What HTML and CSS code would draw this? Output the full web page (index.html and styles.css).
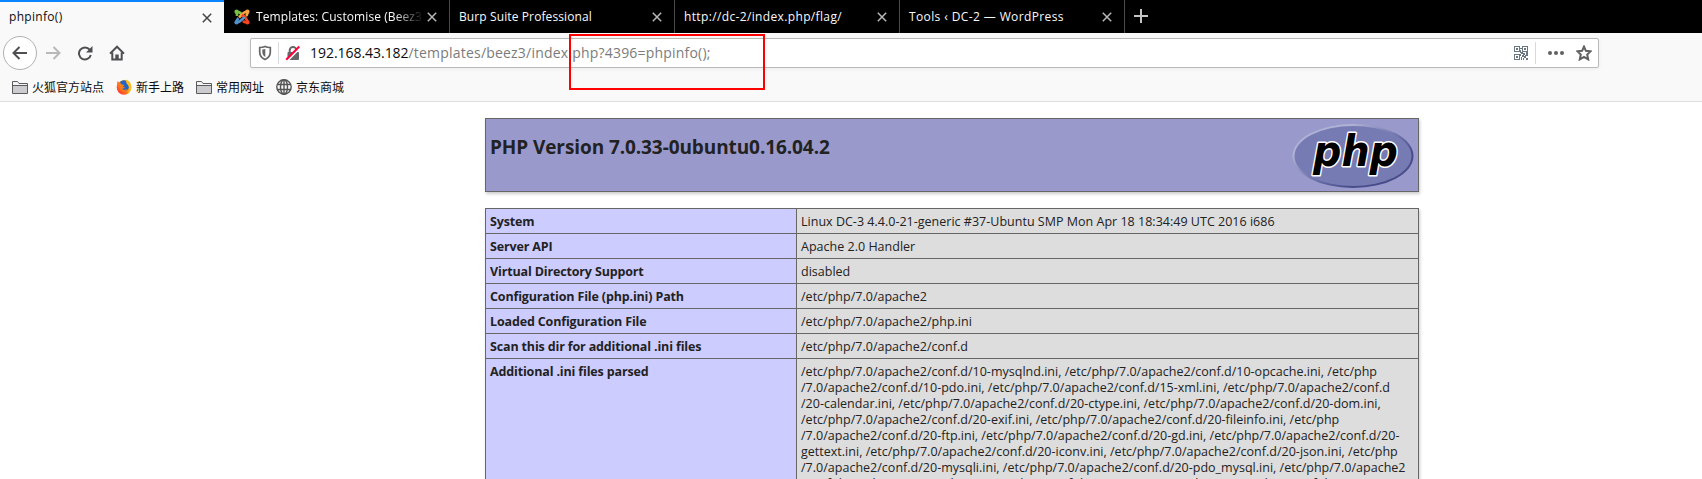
FILE: index.html
```html
<!DOCTYPE html>
<html lang="zh-CN">
<head>
<meta charset="utf-8">
<title>phpinfo()</title>
<link rel="stylesheet" href="styles.css">
</head>
<body>
<header class="browser">
  <div class="tabs">
    <div class="tab active"><span class="title t-info">phpinfo()</span><svg class="close" viewBox="0 0 10 10"><path d="M.8.8l8.4 8.4M9.2.8L.8 9.2"/></svg></div>
    <div class="tab second">
      <svg class="favicon" viewBox="0 0 16 16" fill="none" stroke-width="2.6">
        <path d="M3 3.500C5 2 6.500 4 8 5.500L11 8.500" stroke="#7ac143"/><path d="M3 7V4.500L3 3" stroke="#7ac143"/>
        <path d="M13 3C11 2 9.500 4 8 5.500L5 8.500" stroke="#f9a541"/><path d="M13 3.500C13.500 5 13 6 12 7" stroke="#f9a541"/>
        <path d="M13 13C13.500 11.500 12.500 10 11 8.500L8 5.800" stroke="#f44321"/><path d="M13 13C11.500 13.500 10 13 9 12" stroke="#f44321"/>
        <path d="M3 13C5 13.500 6 12.500 8 10.500L10.500 8" stroke="#5091cd"/><path d="M3 13C2.500 11 3.500 10 4.500 9" stroke="#5091cd"/>
        <g stroke="none"><circle cx="2.600" cy="2.800" r="2.200" fill="#7ac143"/><circle cx="13.400" cy="2.800" r="2.200" fill="#f9a541"/><circle cx="13.400" cy="13.300" r="2.200" fill="#f44321"/><circle cx="2.600" cy="13.300" r="2.200" fill="#5091cd"/></g>
      </svg>
      <span class="title t-templates">Templates: Customise (Beez3</span><svg class="close" viewBox="0 0 10 10"><path d="M.8.8l8.4 8.4M9.2.8L.8 9.2"/></svg></div>
    <div class="tab"><span class="title t-burp">Burp Suite Professional</span><svg class="close" viewBox="0 0 10 10"><path d="M.8.8l8.4 8.4M9.2.8L.8 9.2"/></svg></div>
    <div class="tab"><span class="title t-flag">http://dc-2/index.php/flag/</span><svg class="close" viewBox="0 0 10 10"><path d="M.8.8l8.4 8.4M9.2.8L.8 9.2"/></svg></div>
    <div class="tab"><span class="title t-tools">Tools ‹ DC-2 — WordPress</span><svg class="close" viewBox="0 0 10 10"><path d="M.8.8l8.4 8.4M9.2.8L.8 9.2"/></svg></div>
    <svg class="new-tab" viewBox="0 0 14 14"><path d="M7 0v14M0 7h14"/></svg>
  </div>

  <div class="toolbar">
    <span class="back"><svg class="icon" viewBox="0 0 16 16"><path d="M15 8H1.800M7.500 2L1.500 8l6 6"/></svg></span>
    <svg class="icon forward" viewBox="0 0 16 16"><path d="M1 8h13.200M8.500 2l6 6-6 6"/></svg>
    <svg class="icon reload" viewBox="0 0 16 16"><path d="M12.700 4.700A6 6 0 1 0 13.800 10"/><path class="solid" d="M15.500 1v6.500H9z"/></svg>
    <svg class="icon home" viewBox="0 0 16 16"><path d="M1 8.600L8 1.700l7 6.900M3.300 7.500V14.500h9.400V7.500"/><path class="solid" d="M6.300 15V9.500h3.400V15z"/></svg>
    <div class="urlbar">
      <svg class="shield" viewBox="0 0 14 16"><path d="M7 1.500c2 .9 3.800 1 5.300 1V7c0 3.600-2 6-5.300 7.500C3.700 13 1.700 10.600 1.700 7V2.500c1.500 0 3.300-.1 5.300-1z"/><path class="solid" d="M7.300 4v8C5.300 11 4.300 9 4.300 7V4.600z"/></svg>
      <span class="divider"></span>
      <svg class="lock" viewBox="0 0 16 16"><path d="M4.700 8V5.300a3.300 3.300 0 0 1 6.600 0V8" fill="none" stroke="#666" stroke-width="2"/><rect x="2.500" y="7" width="11.500" height="8" rx="1" fill="#666"/><path d="M2.200 15.800L15 3" stroke="#fff" stroke-width="2"/><path d="M1.200 14.800L14.300 1.500" stroke="#ff0039" stroke-width="2"/></svg>
      <span class="host">192.168.43.182</span><span class="path">/templates/beez3/index.php?4396=phpinfo();</span>
      <svg class="qr" viewBox="0 0 14 14" shape-rendering="crispEdges"><path fill="none" stroke="#6b7683" d="M.5.5h5v5h-5zM8.500.5h5v5h-5zM.5 8.500h5v5h-5z"/><path fill="#6b7683" d="M2 2h2v2H2zM10 2h2v2h-2zM2 10h2v2H2zM6 2h2v1H6zM6 4h1v3H6zM7 6h2v2H7zM9 7h2v2H9zM12 6h2v2h-2zM6 8h1v2H6zM8 9h2v2H8zM11 9h1v1h-1zM12 8h2v2h-2zM10 10h2v2h-2zM7 11h1v3H7zM12 12h2v2h-2zM9 12h1v2H9z"/></svg>
      <span class="divider"></span>
      <svg class="dots" viewBox="0 0 16 16"><circle cx="2" cy="8" r="2"/><circle cx="8" cy="8" r="2"/><circle cx="14" cy="8" r="2"/></svg>
      <svg class="icon star" viewBox="0 0 16 16"><path d="M8 1.600l1.900 4.200 4.700.5-3.400 3.200 1 4.900L8 11.900l-4.200 2.500 1-4.900L1.400 6.300l4.700-.5z"/></svg>
    </div>
  </div>

  <nav class="bookmarks">
    <span class="bookmark b1"><svg viewBox="0 0 16 16"><path d="M.5 14.500v-12h5l1.500 2h8.500v10zM.5 6.500h15" fill="#cccbcf" stroke="#5b5a5d"/><path d="M1 3h4.300l1.500 2H15v1H1z" fill="#f4f4f5"/></svg>火狐官方站点</span>
    <span class="bookmark b2"><svg viewBox="0 0 16 16"><defs><linearGradient id="fire" x1="1" y1="0" x2="0" y2="1"><stop offset="0" stop-color="#ffe226"/><stop offset=".45" stop-color="#ff980e"/><stop offset="1" stop-color="#ff1744"/></linearGradient></defs><circle cx="8" cy="8.500" r="7.300" fill="url(#fire)"/><path d="M1 7L1.500 2l2 2z" fill="#ff6b1a"/><path d="M4 3C7 .2 11 1 12.500 4c2 4-.5 8-4 8C6 12 4 10.500 4 8.500l3-.5 1-2-3-.8z" fill="#2464c9"/><path d="M10 .5c4 1.500 5.800 5 5.200 9-.4 2.500-2 4.500-4 5.500 2-3 2.500-6 1-8.500C11 5 9.500 3 10 .5z" fill="#ffbd20"/><path d="M3.500 7.500c2-1 3 1 5.500.6-.6 1.400-2 1.600-3 1.400 1 1.600 3.500 1.500 5 .5-1 3-6.500 3-7.500-.5z" fill="#ff7a16"/></svg>新手上路</span>
    <span class="bookmark b3"><svg viewBox="0 0 16 16"><path d="M.5 14.500v-12h5l1.500 2h8.500v10zM.5 6.500h15" fill="#cccbcf" stroke="#5b5a5d"/><path d="M1 3h4.300l1.500 2H15v1H1z" fill="#f4f4f5"/></svg>常用网址</span>
    <span class="bookmark b4"><svg viewBox="0 0 16 16" fill="none" stroke="#555" stroke-width="1.400"><circle cx="8" cy="8" r="7.200"/><ellipse cx="8" cy="8" rx="3.500" ry="7.200"/><path d="M1.500 5.500h13M1.500 10.500h13M8 1v14"/></svg>京东商城</span>
  </nav>
  <div class="highlight"></div>
</header>

<main class="page">
  <section class="banner">
    <h1>PHP Version 7.0.33-0ubuntu0.16.04.2</h1>
    <svg class="php-logo" viewBox="0 0 122 66">
      <defs>
        <linearGradient id="rim" x1="0" y1="0" x2="1" y2="1"><stop offset=".25" stop-color="#aeb2d5"/><stop offset=".5" stop-color="#7377ad"/><stop offset=".72" stop-color="#484c89"/></linearGradient>
      </defs>
      <ellipse cx="61" cy="33" rx="60.500" ry="32" fill="url(#rim)"/>
      <ellipse cx="61" cy="33" rx="58.500" ry="30" fill="#777bb3"/>
      <text x="21" y="42.500" textLength="85" lengthAdjust="spacingAndGlyphs">php</text>
    </svg>
  </section>

  <div class="info">
    <div class="row"><b>System</b><span>Linux DC-3 4.4.0-21-generic #37-Ubuntu SMP Mon Apr 18 18:34:49 UTC 2016 i686</span></div>
    <div class="row"><b>Server API</b><span>Apache 2.0 Handler</span></div>
    <div class="row"><b>Virtual Directory Support</b><span>disabled</span></div>
    <div class="row"><b>Configuration File (php.ini) Path</b><span>/etc/php/7.0/apache2</span></div>
    <div class="row"><b>Loaded Configuration File</b><span>/etc/php/7.0/apache2/php.ini</span></div>
    <div class="row"><b>Scan this dir for additional .ini files</b><span>/etc/php/7.0/apache2/conf.d</span></div>
    <div class="row"><b>Additional .ini files parsed</b><span>/etc/php/7.0/apache2/conf.d/10-mysqlnd.ini, /etc/php/7.0/apache2/conf.d/10-opcache.ini, /etc/php<br>/7.0/apache2/conf.d/10-pdo.ini, /etc/php/7.0/apache2/conf.d/15-xml.ini, /etc/php/7.0/apache2/conf.d<br>/20-calendar.ini, /etc/php/7.0/apache2/conf.d/20-ctype.ini, /etc/php/7.0/apache2/conf.d/20-dom.ini,<br>/etc/php/7.0/apache2/conf.d/20-exif.ini, /etc/php/7.0/apache2/conf.d/20-fileinfo.ini, /etc/php<br>/7.0/apache2/conf.d/20-ftp.ini, /etc/php/7.0/apache2/conf.d/20-gd.ini, /etc/php/7.0/apache2/conf.d/20-<br>gettext.ini, /etc/php/7.0/apache2/conf.d/20-iconv.ini, /etc/php/7.0/apache2/conf.d/20-json.ini, /etc/php<br>/7.0/apache2/conf.d/20-mysqli.ini, /etc/php/7.0/apache2/conf.d/20-pdo_mysql.ini, /etc/php/7.0/apache2<br>/conf.d/20-phar.ini, /etc/php/7.0/apache2/conf.d/20-posix.ini, /etc/php/7.0/apache2/conf.d</span></div>
  </div>
</main>
</body>
</html>
```
FILE: styles.css
```css
* { box-sizing: border-box; }
html, body { height: 479px; overflow: hidden; }
body {
  margin: 0;
  background: #fff;
  color: #222;
  font-family: "Open Sans", "Noto Sans CJK SC", sans-serif;
  display: flex;
  flex-direction: column;
}
svg { display: block; flex: none; }

/* Browser chrome */
.browser {
  position: relative;
  flex: none;
  height: 102px;
  background: #f9f9fa;
  border-bottom: 1px solid #dededf;
}
.tabs { display: flex; height: 33px; background: #000; }
.tab {
  display: flex;
  align-items: center;
  width: 225px;
  padding: 1px 12px 0 9px;
  border-right: 1px solid #4a4a4a;
  color: #f9f9fa;
}
.tab.second { width: 226px; padding-left: 10px; }
.tab.active {
  width: 224px;
  padding: 0 12px 0 9px;
  background: #f9f9fa;
  border-top: 2px solid #0a84ff;
  border-right: 0;
  color: #0c0c0d;
}
.title {
  flex: 1;
  min-width: 0;
  font-size: 12px;
  line-height: 18px;
  white-space: nowrap;
  margin-top: -1px;
}
.t-info { letter-spacing: .3px; }
.t-templates {
  overflow: hidden;
  letter-spacing: .09px;
  -webkit-mask-image: linear-gradient(to right, #000 138px, transparent 168px);
  mask-image: linear-gradient(to right, #000 138px, transparent 168px);
}
.t-burp { letter-spacing: .11px; }
.t-flag { letter-spacing: .355px; }
.t-tools { letter-spacing: .385px; }
.close { width: 10px; height: 10px; fill: none; stroke: #b8b8b8; stroke-width: 1.5; }
.active .close { stroke: #444; }
.favicon { width: 16px; height: 16px; margin-right: 6px; }
.new-tab { width: 14px; height: 14px; margin: 9px 0 0 9px; stroke: #c4c4c4; stroke-width: 2; }

.toolbar { display: flex; align-items: center; height: 40px; padding-left: 3px; }
.icon { width: 16px; height: 16px; fill: none; stroke: #4f4f51; stroke-width: 2; }
.icon .solid { fill: #4f4f51; stroke: none; }
.back {
  display: flex;
  align-items: center;
  justify-content: center;
  width: 34px;
  height: 34px;
  border: 1px solid #b1b1b1;
  border-radius: 50%;
  background: #fff;
}
.forward { margin-left: 8px; stroke: #b9b9ba; }
.reload { margin-left: 16px; }
.home { margin-left: 16px; }
.urlbar {
  display: flex;
  align-items: center;
  width: 1349px;
  height: 30px;
  margin-left: 125px;
  padding: 0 6px 0 7px;
  background: #fff;
  border: 1px solid #b9b9ba;
  border-radius: 2px;
  box-shadow: 0 1px 4px rgba(0, 0, 0, .06);
}
.shield { width: 14px; height: 16px; margin-right: 6px; fill: none; stroke: #666; stroke-width: 1.7; }
.shield .solid { fill: #666; stroke: none; }
.divider { width: 1px; height: 22px; background: #d9d9da; }
.lock { width: 16px; height: 16px; margin: 0 9px 0 6px; }
.host, .path { font-size: 14px; line-height: 20px; white-space: nowrap; margin-top: -1px; }
.host { color: #0c0c0d; letter-spacing: -.04px; }
.path { color: #7b7b7c; letter-spacing: .2px; }
.qr { width: 14px; height: 14px; margin: 0 7px 0 auto; }
.dots { width: 16px; height: 16px; margin: 0 12px; fill: #606062; }
.star { stroke: #606062; }

.bookmarks { display: flex; align-items: center; height: 28px; padding-left: 12px; }
.bookmark {
  display: flex;
  align-items: center;
  gap: 4px;
  font: 12px/18px "Noto Sans CJK SC", sans-serif;
  color: #0c0c0d;
  white-space: nowrap;
}
.bookmark svg { width: 16px; height: 16px; }
.b1 { width: 104px; }
.b2, .b3 { width: 80px; }

/* Marker drawn over the address */
.highlight {
  position: absolute;
  left: 569px;
  top: 34px;
  width: 196px;
  height: 56px;
  border: 2px solid #f00;
}

/* phpinfo page */
.page { width: 934px; margin: 16px 0 0 485px; }
.banner {
  display: flex;
  justify-content: space-between;
  height: 74px;
  padding: 4px 4px 0;
  background: #9999cc;
  border: 1px solid #666;
  box-shadow: 1px 2px 3px #ccc;
}
h1 {
  margin: 11px 0 0;
  font-size: 19px;
  line-height: 26px;
  font-weight: 700;
  letter-spacing: -.09px;
  white-space: nowrap;
}
.php-logo { width: 122px; height: 66px; }
.php-logo text {
  font: italic 700 42px "DejaVu Sans", sans-serif;
  fill: #000;
  stroke: #fff;
  stroke-width: 3px;
  stroke-linejoin: round;
  paint-order: stroke;
}
.info {
  margin-top: 16px;
  border: 1px solid #666;
  box-shadow: 1px 2px 3px #ccc;
  font-size: 12.5px;
  line-height: 16px;
}
.row { display: grid; grid-template-columns: 311px 1fr; }
.row + .row { border-top: 1px solid #666; }
.row b {
  padding: 5px 4px 3px;
  background: #ccccff;
  border-right: 1px solid #666;
  letter-spacing: -.15px;
}
.row span { padding: 5px 4px 3px; background: #ddd; letter-spacing: .013px; white-space: nowrap; }
```
